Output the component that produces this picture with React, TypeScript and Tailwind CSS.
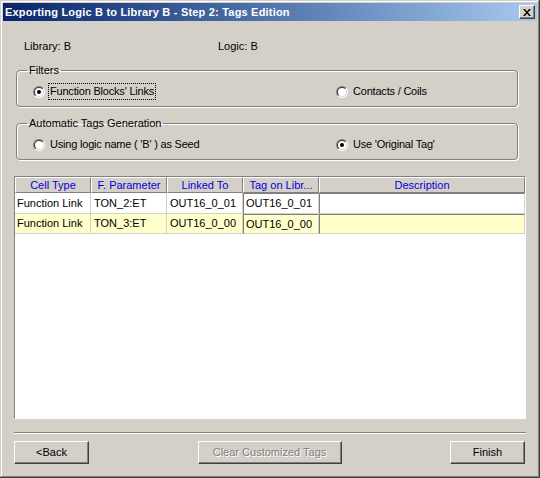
import React from "react";

function Radio({ checked }: { checked: boolean }) {
  return (
    <svg width="12" height="12" viewBox="0 0 12 12" className="shrink-0">
      <defs>
        <linearGradient id="ro" x1="0" y1="0" x2="1" y2="1">
          <stop offset="0.5" stopColor="#808080" />
          <stop offset="0.5" stopColor="#ffffff" />
        </linearGradient>
        <linearGradient id="ri" x1="0" y1="0" x2="1" y2="1">
          <stop offset="0.5" stopColor="#404040" />
          <stop offset="0.5" stopColor="#d4d0c8" />
        </linearGradient>
      </defs>
      <circle cx="6" cy="6" r="6" fill="url(#ro)" />
      <circle cx="6" cy="6" r="5" fill="url(#ri)" />
      <circle cx="6" cy="6" r="4" fill="#ffffff" />
      {checked && <circle cx="6" cy="6" r="2" fill="#000000" />}
    </svg>
  );
}

function Btn({ label, w, disabled }: { label: string; w: string; disabled?: boolean }) {
  return (
    <div
      className={
        "h-[23px] flex items-center justify-center border border-t-white border-l-white border-r-[#404040] border-b-[#404040] shadow-[inset_-1px_-1px_0_#808080] bg-[#d4d0c8] " +
        w +
        (disabled ? " text-[#808080] [text-shadow:1px_1px_0_#ffffff]" : " text-black")
      }
    >
      {label}
    </div>
  );
}

const rows = [
  { a: "Function Link", b: "TON_2:ET", c: "OUT16_0_01", d: "OUT16_0_01", bg: "bg-white", h: "h-[21px]" },
  { a: "Function Link", b: "TON_3:ET", c: "OUT16_0_00", d: "OUT16_0_00", bg: "bg-[#ffffcc]", h: "h-[20px]" },
];

export default function App() {
  return (
    <div className="w-[540px] h-[478px] bg-[#d4d0c8] p-[3px] shadow-[inset_-1px_-1px_0_#404040,inset_1px_1px_0_#d4d0c8,inset_-2px_-2px_0_#808080,inset_2px_2px_0_#ffffff] font-['Liberation_Sans',Arial,sans-serif] text-[11px] leading-[13px] text-black overflow-hidden">
      {/* title bar */}
      <div className="h-[18px] flex items-center justify-between bg-linear-to-r from-[#0a246a] to-[#a6caf0] pl-[2px] pr-[2px]">
        <span className="text-white font-bold text-[11px] tracking-[0.2px]">Exporting Logic B to Library B - Step 2: Tags Edition</span>
        <div className="w-[16px] h-[14px] bg-[#d4d0c8] border border-t-white border-l-white border-r-[#404040] border-b-[#404040] shadow-[inset_-1px_-1px_0_#808080] flex items-center justify-center">
          <svg width="8" height="7" viewBox="0 0 8 7">
            <path d="M0 0h2l2 2.5L6 0h2L5 3.5 8 7H6L4 4.5 2 7H0l3-3.5z" fill="#000" />
          </svg>
        </div>
      </div>

      {/* library / logic */}
      <div className="flex mt-[19px] pl-[21px] h-[13px]">
        <div className="w-[194px]">Library: B</div>
        <div>Logic: B</div>
      </div>

      {/* Filters */}
      <fieldset className="mt-[11px] ml-[13px] w-[502px] h-[43px] border border-[#808080] rounded-[4px] shadow-[inset_1px_1px_0_#ffffff,1px_1px_0_#ffffff]">
        <legend className="ml-[10px] px-[2px]">Filters</legend>
        <div className="flex items-center h-[17px] mt-[6px] pl-[16px] tracking-[-0.2px]">
          <div className="w-[303px] flex items-center gap-[3px]">
            <Radio checked />
            <span className="border border-dotted border-black px-[1px] leading-[15px]">Function Blocks' Links</span>
          </div>
          <div className="flex items-center gap-[5px]">
            <Radio checked={false} />
            <span>Contacts / Coils</span>
          </div>
        </div>
      </fieldset>

      {/* Automatic Tags Generation */}
      <fieldset className="mt-[10px] ml-[13px] w-[502px] h-[43px] border border-[#808080] rounded-[4px] shadow-[inset_1px_1px_0_#ffffff,1px_1px_0_#ffffff]">
        <legend className="ml-[10px] px-[2px]">Automatic Tags Generation</legend>
        <div className="flex items-center h-[17px] mt-[6px] pl-[16px] tracking-[-0.2px]">
          <div className="w-[303px] flex items-center gap-[5px]">
            <Radio checked={false} />
            <span>Using logic name ( 'B' ) as Seed</span>
          </div>
          <div className="flex items-center gap-[5px]">
            <Radio checked />
            <span>Use 'Original Tag'</span>
          </div>
        </div>
      </fieldset>

      {/* table */}
      <div className="mt-[16px] ml-[11px] w-[512px] h-[243px] bg-white border border-t-[#808080] border-l-[#808080] border-r-white border-b-white">
        <div className="flex">
          {["Cell Type", "F. Parameter", "Linked To", "Tag on Libr..."].map((h) => (
            <div
              key={h}
              className="w-[76px] h-[16px] bg-[#d4d0c8] border border-t-white border-l-white border-r-[#808080] border-b-[#808080] text-[#0000e0] flex items-center justify-center"
            >
              {h}
            </div>
          ))}
          <div className="flex-1 h-[16px] bg-[#d4d0c8] border border-t-white border-l-white border-r-[#808080] border-b-[#808080] text-[#0000e0] flex items-center justify-center">
            Description
          </div>
        </div>
        {rows.map((r, i) => (
          <div key={i} className={"flex " + r.bg}>
            <div className={"w-[76px] flex items-center pl-[2px] border-r border-b border-[#d4d0c8] " + r.h}>{r.a}</div>
            <div className={"w-[76px] flex items-center pl-[3px] border-r border-b border-[#d4d0c8] " + r.h}>{r.b}</div>
            <div className={"w-[76px] flex items-center pl-[3px] border-r border-b border-[#d4d0c8] " + r.h}>{r.c}</div>
            <div className={"w-[76px] flex items-center pl-[2px] border border-t-[#808080] border-l-[#808080] border-r-[#d4d0c8] border-b-[#d4d0c8] " + r.h}>{r.d}</div>
            <div className={"flex-1 border border-t-[#808080] border-l-[#808080] border-r-[#d4d0c8] border-b-[#d4d0c8] " + r.h}></div>
          </div>
        ))}
      </div>

      {/* separator */}
      <div className="mt-[13px] ml-[11px] w-[512px] h-[2px] border-t border-t-[#808080] border-b border-b-white"></div>

      {/* buttons */}
      <div className="mt-[7px] ml-[11px] w-[511px] flex justify-between">
        <Btn label="<Back" w="w-[75px]" />
        <Btn label="Clear Customized Tags" w="w-[144px]" disabled />
        <Btn label="Finish" w="w-[75px]" />
      </div>
    </div>
  );
}
